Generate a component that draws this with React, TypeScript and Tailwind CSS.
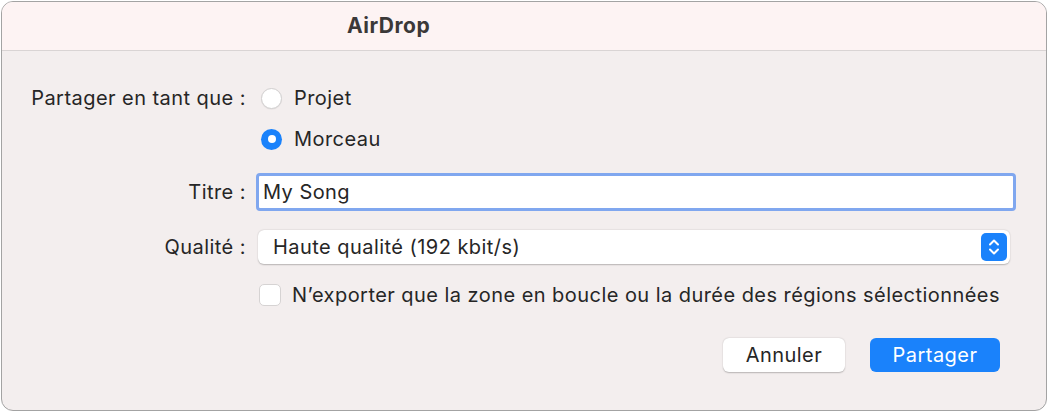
import React from "react";

const font = { fontFamily: "Inter, 'Noto Sans', sans-serif" };

function Radio({ checked }: { checked?: boolean }) {
  if (checked) {
    return (
      <div className="flex size-[21px] shrink-0 items-center justify-center rounded-full bg-[#1a82fb]">
        <div className="size-[8px] rounded-full bg-white" />
      </div>
    );
  }
  return <div className="size-[21px] shrink-0 rounded-full border border-[#d2d0d0] bg-white shadow-[0_0.5px_1px_rgba(0,0,0,0.08)]" />;
}

function Stepper() {
  return (
    <div className="flex h-[28px] w-[26px] items-center justify-center rounded-[5px] bg-[#1a82fb]">
      <svg width="12" height="20" viewBox="0 0 12 20" fill="none">
        <path d="M2 7.5 L6 3.5 L10 7.5" stroke="white" strokeWidth="2" strokeLinecap="round" strokeLinejoin="round" />
        <path d="M2 12.5 L6 16.5 L10 12.5" stroke="white" strokeWidth="2" strokeLinecap="round" strokeLinejoin="round" />
      </svg>
    </div>
  );
}

export default function App() {
  return (
    <div className="h-[412px] w-[1048px] bg-white p-[1px]" style={font}>
      <div className="flex h-[410px] w-[1046px] flex-col overflow-hidden rounded-[12px] border border-[#a3a3a3] bg-[#f3eeee]">
        <div className="flex h-[49px] shrink-0 items-center border-b border-[#d9d4d4] bg-[#fdf3f3] pl-[345px]">
          <span className="text-[21px] font-bold tracking-[0.5px] text-[#3b3838]">AirDrop</span>
        </div>

        <div className="grid grid-cols-[244px_1fr] gap-x-[12px] pt-[32px] pr-[30px] text-[20px] tracking-[0.45px] text-[#262626]">
          <div className="flex h-[30px] items-center justify-end">Partager en tant que :</div>
          <div className="flex h-[30px] items-center gap-[12px] pl-[3px]">
            <Radio />
            <span>Projet</span>
          </div>

          <div />
          <div className="mt-[11px] flex h-[30px] items-center gap-[12px] pl-[3px]">
            <Radio checked />
            <span>Morceau</span>
          </div>

          <div className="mt-[19px] flex h-[38px] items-center justify-end">Titre :</div>
          <div className="mt-[19px] -ml-[2px] flex h-[38px] items-center rounded-[4px] border-[3px] border-[#80a7ef] bg-white pl-[4px]">
            My Song
          </div>

          <div className="mt-[19px] flex h-[34px] items-center justify-end">Qualité :</div>
          <div className="mt-[19px] mr-[6px] flex h-[34px] items-center justify-between rounded-[6px] bg-white pr-[3px] pl-[15px] shadow-[0_0.5px_1.5px_rgba(0,0,0,0.25)]">
            <span>Haute qualité (192 kbit/s)</span>
            <Stepper />
          </div>

          <div />
          <div className="mt-[19px] flex h-[24px] items-center gap-[11px] pl-[1px]">
            <div className="size-[22px] shrink-0 rounded-[5px] border border-[#d6d3d3] bg-white" />
            <span className="whitespace-nowrap">N’exporter que la zone en boucle ou la durée des régions sélectionnées</span>
          </div>
        </div>

        <div className="mt-[31px] flex justify-end gap-[25px] pr-[46px] text-[20px] tracking-[0.45px]">
          <div className="flex h-[34px] w-[122px] items-center justify-center rounded-[6px] bg-white text-[#262626] shadow-[0_0.5px_1.5px_rgba(0,0,0,0.25)]">
            Annuler
          </div>
          <div className="flex h-[34px] w-[130px] items-center justify-center rounded-[6px] bg-[#1a82fb] text-white">
            Partager
          </div>
        </div>
      </div>
    </div>
  );
}
